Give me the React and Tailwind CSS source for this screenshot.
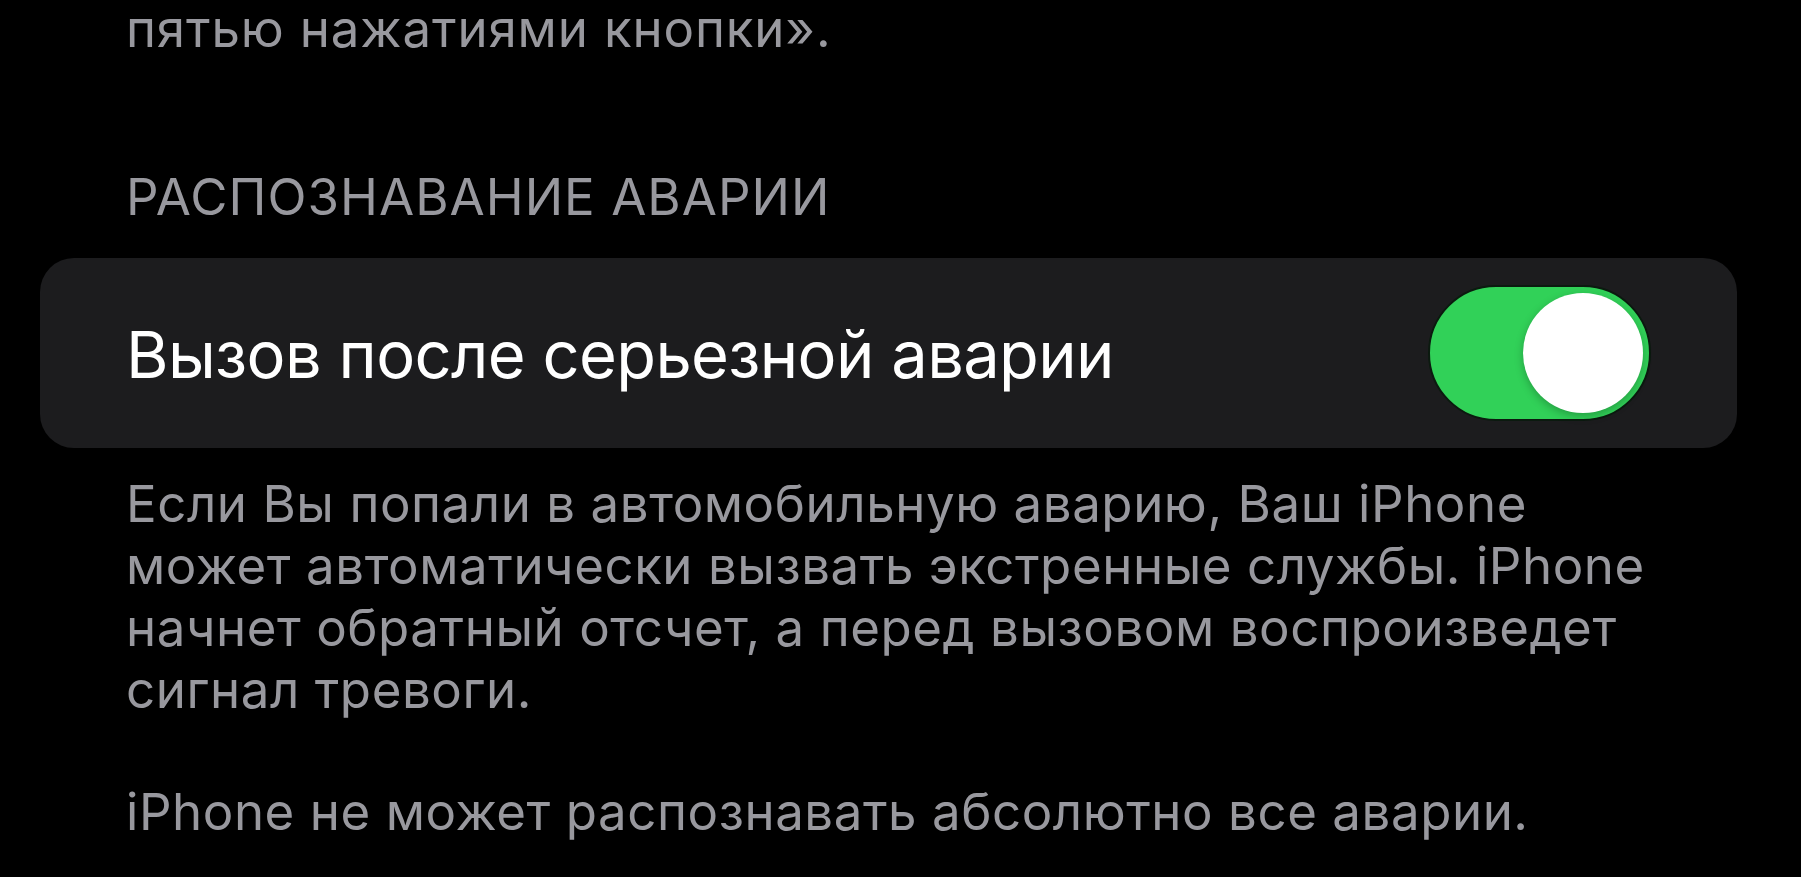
import React, { useState } from "react"

/**
 * Crash detection settings section (iOS dark style).
 */
function Toggle({ on, onChange }) {
  return (
    <button
      type="button"
      onClick={() => onChange(!on)}
      className={`relative flex h-[136px] w-[223px] shrink-0 items-center rounded-full border-2 border-[#0b1a0f] px-[6px] transition-colors ${
        on ? "justify-end bg-[#31d158]" : "justify-start bg-[#39393d]"
      }`}
    >
      <span className="h-[120px] w-[120px] rounded-full bg-white shadow-[0_3px_8px_rgba(0,0,0,0.25)]" />
    </button>
  )
}

export default function App() {
  const [enabled, setEnabled] = useState(true)

  return (
    <div
      className="min-h-screen w-full overflow-hidden bg-black"
      style={{ fontFamily: "Inter, 'Noto Sans', sans-serif" }}
    >
      <div className="-mt-[2px] pl-[126px] text-[51px] leading-[62px] tracking-[0.017em] text-[#98989e]">
        пятью нажатиями кнопки».
      </div>

      <div className="mt-[106px] pl-[126px] text-[51px] leading-[62px] tracking-[0.02em] text-[#98989e]">
        РАСПОЗНАВАНИЕ АВАРИИ
      </div>

      <div className="ml-[40px] mr-[64px] mt-[30px] flex h-[190px] items-center justify-between rounded-[34px] bg-[#1c1c1e] pl-[86px] pr-[86px]">
        <span className="pt-[4px] text-[65px] tracking-[-0.01em] text-white">
          Вызов после серьезной аварии
        </span>
        <Toggle on={enabled} onChange={setEnabled} />
      </div>

      <div className="mt-[25px] pl-[126px] text-[51px] leading-[62px] tracking-[0.011em] text-[#98989e]">
        <p>
          Если Вы попали в автомобильную аварию, Ваш iPhone
          <br />
          может автоматически вызвать экстренные службы. iPhone
          <br />
          начнет обратный отсчет, а перед вызовом воспроизведет
          <br />
          сигнал тревоги.
        </p>
        <p className="mt-[60px]">iPhone не может распознавать абсолютно все аварии.</p>
      </div>
    </div>
  )
}
